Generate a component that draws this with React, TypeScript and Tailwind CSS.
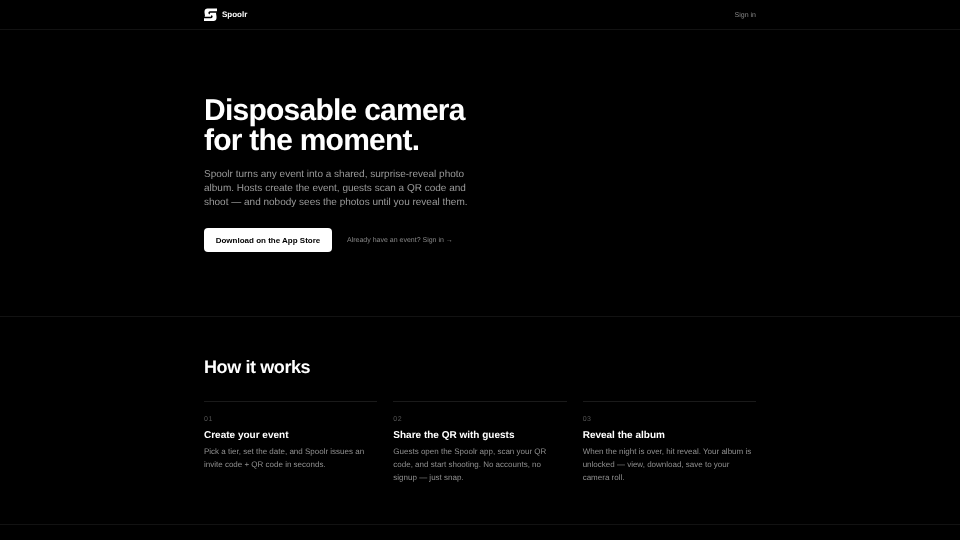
const steps = [
  {
    num: "01",
    title: "Create your event",
    body: "Pick a tier, set the date, and Spoolr issues an invite code + QR code in seconds.",
  },
  {
    num: "02",
    title: "Share the QR with guests",
    body: "Guests open the Spoolr app, scan your QR code, and start shooting. No accounts, no signup — just snap.",
  },
  {
    num: "03",
    title: "Reveal the album",
    body: "When the night is over, hit reveal. Your album is unlocked — view, download, save to your camera roll.",
  },
];

function Logo() {
  return (
    <svg width="13" height="13" viewBox="0 0 13 13" fill="none">
      <path d="M3.500.5H13V3.500L12 5 12.500 8.500V10c0 1.700-1.300 3-3 3H0V10L1 8 .5 4.500V3.500c0-1.700 1.300-3 3-3z" fill="#fff" />
      <path d="M13.500 4H6.300C5 4 4.700 5.300 5.800 5.800" stroke="#000" strokeWidth="1.500" />
      <path d="M-.5 9.500H6.700C8 9.500 8.300 8.200 7.200 7.700" stroke="#000" strokeWidth="1.500" />
    </svg>
  );
}

export default function App() {
  return (
    <div className="min-h-screen overflow-hidden bg-black font-['Liberation_Sans',Arial,sans-serif] text-white [text-rendering:geometricPrecision]">
      <nav className="h-[30px] border-b border-white/[0.07]">
        <div className="mx-auto flex h-full w-[552px] items-center justify-between will-change-transform">
          <div className="flex items-center gap-[5px]">
            <Logo />
            <span className="pt-[1px] text-[8px] font-bold">Spoolr</span>
          </div>
          <span className="pt-[4px] text-[7px] text-[#888]">Sign in</span>
        </div>
      </nav>

      <section className="h-[287px] border-b border-white/[0.07]">
        <div className="mx-auto w-[552px] pt-[66px] will-change-transform">
          <h1 className="text-[30px] font-bold leading-[30px] tracking-[-0.75px]">
            Disposable camera
            <br />
            for the moment.
          </h1>
          <p className="mt-[12px] w-[280px] text-[10px] leading-[14px] text-[#9a9a9a]">
            Spoolr turns any event into a shared, surprise-reveal photo album. Hosts create the event,
            guests scan a QR code and shoot — and nobody sees the photos until you reveal them.
          </p>
          <div className="mt-[18px] flex items-center gap-[15px]">
            <button className="h-[24px] w-[128px] rounded-[4px] bg-white pt-[1px] text-[8px] font-bold text-black">
              Download on the App Store
            </button>
            <span className="pt-[3px] text-[7px] text-[#888]">Already have an event? Sign in →</span>
          </div>
        </div>
      </section>

      <section className="h-[208px] border-b border-white/[0.07]">
        <div className="mx-auto w-[552px] pt-[39px] will-change-transform">
          <h2 className="text-[18px] font-bold leading-[22px] tracking-[-0.4px]">How it works</h2>
          <div className="mt-[23px] grid grid-cols-3 gap-[16px]">
            {steps.map((s) => (
              <div key={s.num} className="border-t border-white/10 pt-[13px]">
                <div className="text-[7px] leading-[9px] tracking-[0.5px] text-[#555]">{s.num}</div>
                <h3 className="mt-[6px] text-[10px] font-bold leading-[12px]">{s.title}</h3>
                <p className="mt-[3px] text-[8px] leading-[13px] text-[#909090]">{s.body}</p>
              </div>
            ))}
          </div>
        </div>
      </section>
    </div>
  );
}
